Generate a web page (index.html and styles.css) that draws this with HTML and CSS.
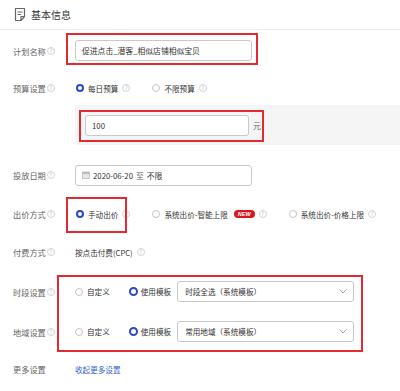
FILE: index.html
```html
<!DOCTYPE html>
<html lang="zh-CN">
<head>
<meta charset="utf-8">
<title>基本信息</title>
<link rel="stylesheet" href="styles.css">
</head>
<body>
<div class="page">
  <div class="header">
    <svg class="doc-icon" width="12" height="15" viewBox="0 0 12 15">
      <path d="M1.5 1.5 H10.5 V9.5 L7 13.5 H1.5 Z" fill="none" stroke="#666" stroke-width="1.2" stroke-linejoin="round"/>
      <path d="M10.5 9.5 H7 V13.5" fill="none" stroke="#666" stroke-width="1.2" stroke-linejoin="round"/>
      <path d="M3.5 5 H8.5 M3.5 7.5 H7" stroke="#666" stroke-width="1.1"/>
    </svg>
    <span class="title">基本信息</span>
  </div>

  <div class="row r-name">
    <div class="label">计划名称<i class="help">?</i></div>
    <div class="field w-177">促进点击_潜客_相似店铺相似宝贝</div>
  </div>

  <div class="row r-budget">
    <div class="label">预算设置<i class="help">?</i></div>
    <div class="opts">
      <span class="opt"><i class="radio on"></i>每日预算<i class="help">?</i></span>
      <span class="opt"><i class="radio"></i>不限预算<i class="help">?</i></span>
    </div>
  </div>

  <div class="budget-box">
    <div class="field w-164">100</div>
    <span class="unit">元</span>
  </div>

  <div class="row r-date">
    <div class="label">投放日期<i class="help">?</i></div>
    <div class="field w-177 date">
      <svg class="cal" width="8" height="8" viewBox="0 0 8 8">
        <rect x="0.5" y="1" width="7" height="6.5" fill="#e6e6e6" stroke="#bbb" stroke-width="0.8"/>
        <rect x="0.5" y="1" width="7" height="2" fill="#bbb"/>
      </svg>
      <span>2020-06-20</span><span class="to">至</span><span>不限</span>
    </div>
  </div>

  <div class="row r-bid">
    <div class="label">出价方式<i class="help">?</i></div>
    <div class="opts">
      <span class="opt"><i class="radio on"></i>手动出价<i class="help">?</i></span>
      <span class="opt"><i class="radio"></i>系统出价-智能上限<b class="new">NEW</b><i class="help">?</i></span>
      <span class="opt"><i class="radio"></i>系统出价-价格上限<i class="help">?</i></span>
    </div>
  </div>

  <div class="row r-pay">
    <div class="label">付费方式<i class="help">?</i></div>
    <div class="opts"><span class="opt">按点击付费(CPC)<i class="help">?</i></span></div>
  </div>

  <div class="row r-time">
    <div class="label">时段设置<i class="help">?</i></div>
    <div class="opts">
      <span class="opt o-custom"><i class="radio"></i>自定义</span>
      <span class="opt o-tpl"><i class="radio on"></i>使用模板</span>
      <div class="select">时段全选（系统模板）<svg class="chev" width="8" height="5" viewBox="0 0 8 5"><path d="M0.5 0.5 L4 4 L7.5 0.5" fill="none" stroke="#999" stroke-width="0.9"/></svg></div>
    </div>
  </div>

  <div class="row r-region">
    <div class="label">地域设置<i class="help">?</i></div>
    <div class="opts">
      <span class="opt o-custom"><i class="radio"></i>自定义</span>
      <span class="opt o-tpl"><i class="radio on"></i>使用模板</span>
      <div class="select">常用地域（系统模板）<svg class="chev" width="8" height="5" viewBox="0 0 8 5"><path d="M0.5 0.5 L4 4 L7.5 0.5" fill="none" stroke="#999" stroke-width="0.9"/></svg></div>
    </div>
  </div>

  <div class="row r-more">
    <div class="label">更多设置</div>
    <a class="link">收起更多设置</a>
  </div>

  <div class="mark m1"></div>
  <div class="mark m2"></div>
  <div class="mark m3"></div>
  <div class="mark m4"></div>
</div>
</body>
</html>
```

FILE: styles.css
```css
* { box-sizing: border-box; }
html, body { margin: 0; padding: 0; background: #fff; }
.page {
  position: relative;
  width: 400px;
  height: 391px;
  overflow: hidden;
  background: #fff;
  font-family: "Noto Sans CJK SC", "Noto Sans", sans-serif;
  font-size: 7.6px;
  color: #333;
}
i, b { font-style: normal; }

.header {
  height: 30px;
  border-bottom: 1px solid #ededed;
  display: flex;
  align-items: center;
  padding-left: 14px;
  padding-bottom: 1px;
}
.doc-icon { display: block; margin-right: 5px; }
.title { font-size: 10px; color: #333; }

.row { display: flex; align-items: center; }
.label {
  width: 75px;
  flex: none;
  padding-left: 13px;
  color: #666;
  font-size: 8.2px;
  display: flex;
  align-items: center;
  white-space: nowrap;
}
.help {
  width: 8px;
  height: 8px;
  border: 1px solid #d4d4d4;
  border-radius: 50%;
  color: #c4c4c4;
  font-size: 6px;
  line-height: 6px;
  display: inline-flex;
  align-items: center;
  justify-content: center;
  margin-left: 4px;
  flex: none;
}
.label .help { margin-left: 1px; }

.r-name { height: 41px; }
.r-budget { height: 34px; }
.r-date { height: 40px; margin-top: 10px; }
.r-bid { height: 38px; }
.r-pay { height: 38px; }
.r-time { height: 41px; }
.r-region { height: 39px; }
.r-more { height: 36px; }

.field {
  height: 21px;
  border: 1px solid #c9c9c9;
  border-radius: 3px;
  background: #fff;
  display: flex;
  align-items: center;
  padding-left: 6px;
  color: #333;
  font-size: 7.8px;
  white-space: nowrap;
  flex: none;
}
.w-177 { width: 177px; }
.w-164 { width: 164px; }

.opts { display: flex; align-items: center; flex: none; white-space: nowrap; }
.opt { display: inline-flex; align-items: center; margin-right: 21px; flex: none; white-space: nowrap; }
.radio {
  width: 8px;
  height: 8px;
  border: 1px solid #c4c4c4;
  border-radius: 50%;
  background: #fff;
  margin-left: 1px;
  margin-right: 4px;
  flex: none;
}
.radio.on { border: 2.5px solid #2b48c9; }

.budget-box {
  margin-left: 75px;
  height: 40px;
  background: #f5f5f5;
  display: flex;
  align-items: center;
  padding-left: 10px;
}
.unit { margin-left: 4px; color: #666; font-size: 8px; }

.date .cal { display: block; margin-right: 3px; }
.date .to { margin: 0 3px; color: #666; }

.new {
  display: inline-flex;
  align-items: center;
  justify-content: center;
  width: 21px;
  height: 8px;
  border-radius: 4px;
  background: #d7161d;
  color: #fff;
  font-family: "Liberation Sans", sans-serif;
  font-weight: bold;
  font-style: italic;
  font-size: 5.5px;
  margin-left: 6px;
}

.o-custom { margin-right: 18px; }
.o-custom .radio { margin-left: 0; }
.o-tpl { margin-right: 6px; }
.o-tpl .radio { width: 9px; height: 9px; margin-right: 3px; }
.select {
  width: 177px;
  height: 21px;
  border: 1px solid #c9c9c9;
  border-radius: 3px;
  display: flex;
  align-items: center;
  justify-content: space-between;
  padding: 0 6px 0 7px;
  font-size: 7.6px;
  color: #333;
  flex: none;
}
.chev { display: block; }

.link { color: #3465c9; cursor: pointer; }

.mark {
  position: absolute;
  border: 2px solid #e52a2f;
  pointer-events: none;
}
.m1 { left: 66px; top: 33px; width: 192px; height: 32px; }
.m2 { left: 79px; top: 110px; width: 185px; height: 32px; }
.m3 { left: 66px; top: 197px; width: 61px; height: 36px; }
.m4 { left: 57px; top: 275px; width: 306px; height: 77px; }
```
